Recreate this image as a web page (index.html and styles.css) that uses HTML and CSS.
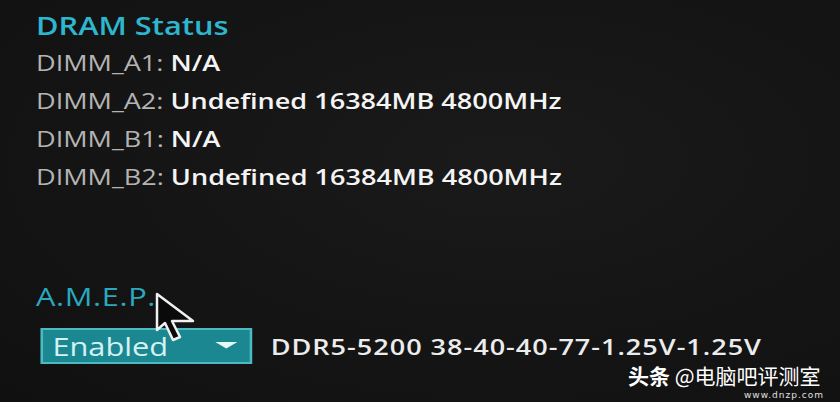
FILE: index.html
```html
<!DOCTYPE html>
<html>
<head>
<meta charset="utf-8">
<link rel="stylesheet" href="styles.css">
</head>
<body>
<div class="screen">
  <div class="content">
    <section class="dram">
      <h1 class="title">DRAM Status</h1>
      <div class="row"><span class="label">DIMM_A1:</span> <span class="value">N/A</span></div>
      <div class="row"><span class="label">DIMM_A2:</span> <span class="value">Undefined 16384MB 4800MHz</span></div>
      <div class="row"><span class="label">DIMM_B1:</span> <span class="value">N/A</span></div>
      <div class="row"><span class="label">DIMM_B2:</span> <span class="value">Undefined 16384MB 4800MHz</span></div>
    </section>
    <section class="amep">
      <h2 class="title small">A.M.E.P.</h2>
      <div class="setting">
        <div class="select">
          <span class="select-text">Enabled</span>
          <svg class="caret" width="18" height="7" viewBox="0 0 18 7"><polygon points="0,0 18,0 9,6.5" fill="#e6f7f8"/></svg>
        </div>
        <span class="profile">DDR5-5200 38-40-40-77-1.25V-1.25V</span>
      </div>
    </section>
  </div>
  <svg class="cursor" width="42" height="52" viewBox="0 0 42 52">
    <path d="M2 2 L2 38 L10 31 L18 48 L25 45 L17 29 L38 29 Z" fill="#0a0a0a" stroke="#f0f0f0" stroke-width="2.5" stroke-linejoin="round"/>
  </svg>
  <div class="watermark">
    <span class="wm-main"><b>头条</b> @电脑吧评测室</span>
    <span class="wm-sub">www.dnzp.com</span>
  </div>
</div>
</body>
</html>
```
FILE: styles.css
```css
html, body {
  margin: 0;
  padding: 0;
  background: #121212;
}
.screen {
  width: 840px;
  height: 402px;
  position: relative;
  overflow: hidden;
  background: radial-gradient(ellipse at 60% 40%, #1a1a1a 0%, #141414 60%, #101010 100%);
  font-family: "Open Sans", "Noto Sans", sans-serif;
}
.content {
  width: 683px;
  box-sizing: border-box;
  padding: 7px 0 0 29.3px;
  transform: scaleX(1.23);
  transform-origin: 0 0;
}
.title {
  margin: 0;
  color: #2fb6cf;
  font-size: 25px;
  font-weight: 600;
  line-height: 36px;
}
.title.small {
  font-size: 25px;
  font-weight: 400;
  color: #29a9bf;
  letter-spacing: 0.5px;
}
.row {
  font-size: 22px;
  line-height: 38px;
  white-space: nowrap;
}
.label {
  color: #b4b4b4;
}
.value {
  color: #f4f4f4;
  font-weight: 600;
}
.amep {
  margin-top: 83px;
}
.setting {
  display: flex;
  align-items: center;
  gap: 15.5px;
  margin-top: 14px;
  padding-left: 3.3px;
}
.select {
  width: 172px;
  height: 36px;
  box-sizing: border-box;
  border: 2px solid #4db9c0;
  background: #1b8891;
  display: flex;
  align-items: center;
  justify-content: space-between;
  padding: 0 10px 0 8px;
}
.select-text {
  color: #d4f2f3;
  font-size: 25px;
  line-height: 30px;
  font-weight: 500;
}
.caret {
  margin-top: -2px;
}
.profile {
  color: #ececec;
  font-size: 22px;
  font-weight: 600;
  letter-spacing: 0.8px;
  white-space: nowrap;
}
.cursor {
  position: absolute;
  left: 155px;
  top: 292px;
}
.watermark {
  position: absolute;
  left: 628px;
  top: 363px;
  width: 206px;
  height: 39px;
}
.wm-main {
  display: block;
  color: #ffffff;
  font-family: "Noto Sans CJK SC", sans-serif;
  font-size: 21px;
  line-height: 24px;
  white-space: nowrap;
}
.wm-sub {
  position: absolute;
  right: 10px;
  top: 27px;
  color: #e0e0e0;
  font-family: "DejaVu Sans", sans-serif;
  font-size: 9px;
  line-height: 11px;
  letter-spacing: 1px;
}
```
